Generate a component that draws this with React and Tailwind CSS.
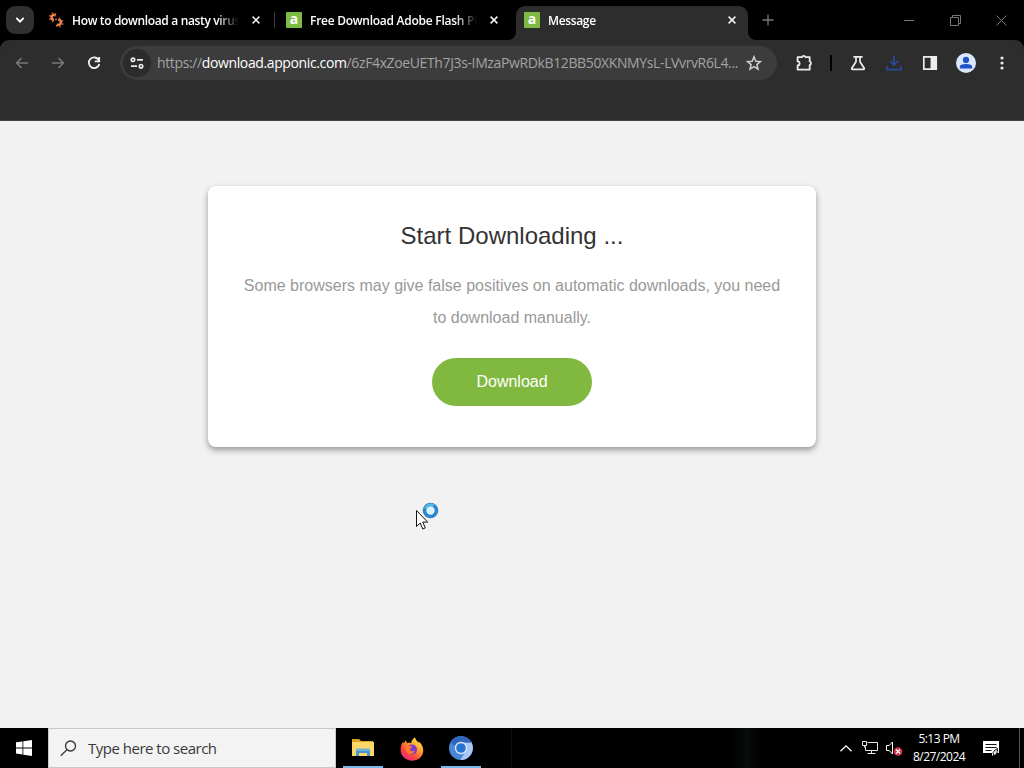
import { useState } from 'react';

const UI_FONT = "font-['Open_Sans','Noto_Sans',sans-serif]";

const TABS = [
  { title: 'How to download a nasty virus', icon: 'gear', spacing: 'tracking-[-0.35px]' },
  { title: 'Free Download Adobe Flash Player', icon: 'apponic', spacing: 'tracking-[-0.26px]' },
  { title: 'Message', icon: 'apponic', spacing: 'tracking-[-0.35px]' },
];

function GearIcon() {
  return (
    <svg width="16" height="16" viewBox="0 0 16 16" fill="none" className="shrink-0">
      <path d="M7.6 3.4Q4.200 2 3.600 5q-.2 2.600 2.400 3" stroke="#f08a58" strokeWidth="2.400" />
      <path d="M1 3.600l2 .6M4.400.6l.5 2M1.200 7.200l2-.6M7.800 1.200L7 3.200M4.400 10l.8-2M7 7.600h2" stroke="#dd6537" strokeWidth="1.500" />
      <path d="M10.200 7.600q3 .4 2.600 3.200-.8 2.800-4 1.800" stroke="#f08a58" strokeWidth="2.400" />
      <path d="M15.400 12.400l-2-.6M12 15.400l-.6-2M15.200 8.600l-2 .6M8.400 14.800l.8-2M11.800 5.800l-.6 2" stroke="#dd6537" strokeWidth="1.500" />
    </svg>
  );
}

function ApponicIcon() {
  return (
    <span className="w-4 h-4 shrink-0 bg-[#7fbb42] rounded-[1px] flex items-center justify-center text-white text-[14px] leading-none font-bold font-['Open_Sans',sans-serif] pb-[3px]">
      a
    </span>
  );
}

function CloseIcon() {
  return (
    <svg width="8" height="8" viewBox="0 0 8 8" stroke="#f2f2f2" strokeWidth="1.5" className="shrink-0">
      <path d="M.6.6l6.8 6.8M7.4.6L.6 7.4" />
    </svg>
  );
}

function Tab({ tab, active, onSelect }) {
  return (
    <div onClick={onSelect} className="relative w-[238px] h-[34px] shrink-0">
      <div className={`flex items-center h-full pl-2 rounded-t-[9px] ${active ? 'w-[232px] bg-[#2d2d2d]' : 'w-[238px]'}`}>
        <div className="flex items-center pb-[6px]">
          {tab.icon === 'gear' ? <GearIcon /> : <ApponicIcon />}
          <span className={`ml-2 mt-0.5 w-[167px] overflow-hidden whitespace-nowrap text-[12px] leading-4 font-semibold text-white mask-r-from-87% ${tab.spacing}`}>
            {tab.title}
          </span>
          <span className="ml-[13px] flex"><CloseIcon /></span>
        </div>
      </div>
      {active && (
        <>
          <svg className="absolute bottom-0 -left-2" width="8" height="8" fill="#2d2d2d"><path d="M8 0v8H0a8 8 0 0 0 8-8z" /></svg>
          <svg className="absolute bottom-0 left-[232px]" width="8" height="8" fill="#2d2d2d"><path d="M0 0v8h8a8 8 0 0 1-8-8z" /></svg>
        </>
      )}
    </div>
  );
}

function TabStrip() {
  const [active, setActive] = useState(2);
  return (
    <div className="h-10 bg-black flex">
      <div className="w-10 pl-[6px] pt-[6px] shrink-0">
        <button className="w-7 h-7 rounded-[9px] bg-[#303030] flex items-center justify-center">
          <svg width="10" height="6" viewBox="0 0 10 6" fill="none" stroke="#fff" strokeWidth="1.9"><path d="M1.3.9L5 4.6 8.7.9" /></svg>
        </button>
      </div>
      <div className="flex pt-[6px] relative">
        {TABS.map((tab, i) => (
          <Tab key={tab.title} tab={tab} active={active === i} onSelect={() => setActive(i)} />
        ))}
        <span className="absolute left-[234px] top-3 w-px h-4 bg-[#3a3a3a]" />
      </div>
      <div className="pt-[14px] pl-2">
        <svg width="12" height="12" stroke="#7a7a7a" strokeWidth="1.3"><path d="M6 .5v11M.5 6h11" /></svg>
      </div>
      <div className="ml-auto flex text-[#777]">
        <button className="w-[46px] h-10 flex items-center justify-center">
          <svg width="10" height="10" stroke="currentColor"><path d="M0 5.5h10" /></svg>
        </button>
        <button className="w-[46px] h-10 flex items-center justify-center">
          <svg width="11" height="11" fill="none" stroke="currentColor"><path d="M.5 2.5h8v8h-8zM2.5 2.5v-2h8v8h-2" /></svg>
        </button>
        <button className="w-[46px] h-10 flex items-center justify-center">
          <svg width="11" height="11" fill="none" stroke="currentColor"><path d="M.5.5l10 10M10.5.5l-10 10" /></svg>
        </button>
      </div>
    </div>
  );
}

function ToolButton({ children }) {
  return <button className="w-9 h-[34px] flex items-center justify-center shrink-0">{children}</button>;
}

function Toolbar() {
  return (
    <div className="bg-black">
      <div className="h-[81px] bg-[#2d2d2d] border-b border-[#454545] pt-[6px] rounded-t-[9px]">
        <div className="flex items-center h-[34px] pl-1">
          <ToolButton>
            <svg width="14" height="12" fill="none" stroke="#787878" strokeWidth="1.6"><path d="M13 6H1.6M6.6 1L1.6 6l5 5" /></svg>
          </ToolButton>
          <ToolButton>
            <svg width="14" height="12" fill="none" stroke="#787878" strokeWidth="1.6"><path d="M1 6h11.4M7.4 1l5 5-5 5" /></svg>
          </ToolButton>
          <ToolButton>
            <svg width="14" height="14" fill="none" stroke="#f0f0f0" strokeWidth="1.8"><path d="M11.8 4.2A5.3 5.3 0 1 0 12.3 8M12.2.9v4.4H7.8" /></svg>
          </ToolButton>
          <div className="ml-2 w-[657px] h-[34px] rounded-full bg-[#3c3c3c] flex items-center pl-[3px] shrink-0">
            <span className="w-7 h-7 rounded-full bg-[#2b2b2b] flex items-center justify-center shrink-0">
              <svg width="14" height="12" fill="none" stroke="#e8e8e8" strokeWidth="1.7"><circle cx="3" cy="2.8" r="1.7" /><path d="M7 2.8h6M1 9.2h6" /><circle cx="11" cy="9.2" r="1.7" /></svg>
            </span>
            <span className="ml-[6px] w-[588px] whitespace-nowrap text-[14px] leading-5 tracking-[-0.375px] text-[#a3a3a3]">
              https://<span className="text-white">download.apponic.com</span>/6zF4xZoeUETh7J3s-IMzaPwRDkB12BB50XKNMYsL-LVvrvR6L4...
            </span>
            <svg width="16" height="16" viewBox="0 0 16 16" fill="none" stroke="#d0d0d0" strokeWidth="1.5" className="shrink-0 ml-px"><path d="M8 1.8l1.8 4.4 4.7.4-3.6 3 1.1 4.6L8 11.7l-4 2.5 1.1-4.6-3.6-3 4.7-.4z" /></svg>
          </div>
          <div className="ml-[9px] flex items-center">
            <ToolButton>
              <svg width="18" height="18" viewBox="0 0 18 18" fill="none" stroke="#ececec" strokeWidth="1.8" strokeLinejoin="round"><path d="M2.600 3.200h4.300a1.900 1.900 0 0 1 3.600 0h4.200v4.300a1.900 1.900 0 0 1 0 3.600v4.500H2.600v-4.200a2 2 0 0 0 0-4z" /></svg>
            </ToolButton>
            <span className="mx-2 w-0.5 h-4 bg-black" />
            <ToolButton>
              <svg width="16" height="16" fill="none" stroke="#ececec" strokeWidth="1.7"><path d="M3.4 1.8h9.2M6 2v4.7l-4.2 6.5q-.3 1 .7 1.1h11q1-.1.7-1.1L10 6.7V2" /></svg>
            </ToolButton>
            <ToolButton>
              <svg width="16" height="16" fill="none" stroke="#2a4a9c" strokeWidth="1.7"><path d="M8 .5v9.4M4 6l4 4 4-4M1 11v3.6h14V11" /></svg>
            </ToolButton>
            <ToolButton>
              <svg width="16" height="16" fill="none" stroke="#ececec" strokeWidth="1.7"><path d="M1.8 1.8h12.4v12.4H1.8z" /><path d="M9.4 1.8h4.8v12.4H9.4z" fill="#ececec" /></svg>
            </ToolButton>
            <ToolButton>
              <svg width="20" height="20"><circle cx="10" cy="10" r="10" fill="#d9e6fc" /><circle cx="10" cy="6.9" r="3.1" fill="#1f55c4" /><path d="M3.8 15.4v-1.5q0-2.8 6.2-2.8t6.2 2.8v1.5z" fill="#1f55c4" /></svg>
            </ToolButton>
            <ToolButton>
              <svg width="4" height="16" fill="#ececec"><circle cx="2" cy="3" r="1.6" /><circle cx="2" cy="8" r="1.6" /><circle cx="2" cy="13" r="1.6" /></svg>
            </ToolButton>
          </div>
        </div>
      </div>
    </div>
  );
}

function Cursor() {
  return (
    <svg className="absolute left-[415px] top-[381px]" width="26" height="30" fill="none">
      <circle cx="15.5" cy="8.5" r="6" stroke="#2f86c9" strokeWidth="3.6" fill="#d9f3fd" />
      <path d="M10.2 6.4a5.8 5.8 0 0 1 8.4-2.6" stroke="#55b9ea" strokeWidth="2.6" />
      <path d="M1.5 8.5v16l3.7-3.5 2.6 6 2.5-1.1-2.6-5.8h5z" fill="#fff" stroke="#111" />
    </svg>
  );
}

function Page() {
  return (
    <main className="relative h-[607px] bg-[#f2f2f2] pt-[65px] font-['Liberation_Sans',Arial,sans-serif]">
      <div className="mx-auto w-[608px] h-[261px] bg-white rounded-lg shadow-[0_3px_6px_rgba(0,0,0,0.38)] px-8 pt-8 text-center">
        <h1 className="text-[24px] leading-9 text-[#333]">Start Downloading ...</h1>
        <p className="mt-4 text-[16px] leading-8 text-[#999]">
          Some browsers may give false positives on automatic downloads, you need to download manually.
        </p>
        <button className="mt-6 w-40 h-12 rounded-full bg-[#80b840] text-white text-[16px]">Download</button>
      </div>
      <Cursor />
    </main>
  );
}

function ExplorerIcon() {
  return (
    <svg width="22" height="18" viewBox="0 0 22 18">
      <path d="M0 0h7l2 2h12v4H0z" fill="#d9a326" />
      <path d="M0 3h22v14H0z" fill="#fbd768" />
      <path d="M4 17v-6h14v6h-3v-3H7v3z" fill="#4a94cf" />
      <path d="M4 9.5h14V12H4z" fill="#6fb2e0" />
    </svg>
  );
}

function FirefoxIcon() {
  return (
    <svg width="24" height="24" viewBox="0 0 24 24">
      <defs>
        <linearGradient id="fox" x1="0.85" y1="0.05" x2="0.2" y2="0.95">
          <stop offset="0" stopColor="#fff04f" />
          <stop offset="0.4" stopColor="#ff9a2a" />
          <stop offset="0.7" stopColor="#ff4a3c" />
          <stop offset="1" stopColor="#e8257e" />
        </linearGradient>
      </defs>
      <path d="M15 .2c.3 2.4 2.1 3.7 3.6 5.6l.2-1.4c3.3 3 4.8 6.3 4.4 10C22.6 19.8 18 23.7 12 23.7S.8 19.2.6 13.3C.5 9.7 1.6 6.9 3.4 4.6l.5 2L5.6 3.2l1.6 3c1.3-.5 2.5-.4 3.8.1C11.5 3.6 12.8 1.6 15 .2z" fill="url(#fox)" />
      <circle cx="12" cy="12.6" r="5" fill="#7a3bd0" />
      <path d="M6 8.3c3 .1 4.6 1 6.5 1.2-.4 1.5-2.3 1.3-2.5 2.7.4 2.4 3.3 2.8 5.2 1.1-.8 3.6-5.4 5-8 2.5C5.3 13.8 5 11 6 8.3z" fill="#ff7a2b" />
    </svg>
  );
}

function ChromiumIcon() {
  return (
    <svg width="24" height="24" viewBox="0 0 24 24">
      <circle cx="12" cy="12" r="12" fill="#4a86d6" />
      <path d="M12 6.5h10.500A12 12 0 0 1 11.3 24l5.5-9z" fill="#a9c6f8" />
      <path d="M1.6 6A12 12 0 0 1 22.5 6.5H12a5.5 5.5 0 0 0-5.3 4.2z" fill="#2f66b8" />
      <circle cx="12" cy="12" r="6.2" fill="#dbe9ff" />
      <circle cx="12" cy="12" r="4.8" fill="#2872d2" />
    </svg>
  );
}

function TaskItem({ running, children }) {
  return (
    <div className="w-10 h-10 flex flex-col items-center">
      <div className="h-10 pt-0.5 flex items-center justify-center">{children}</div>
      {running && <div className="w-10 h-0.5 shrink-0 bg-[#79b9ec]" />}
    </div>
  );
}

function Taskbar() {
  return (
    <footer className="h-10 bg-black flex text-white">
      <button className="w-12 flex items-center justify-center">
        <svg width="16" height="16" fill="#fff"><path d="M0 2.3l6.5-.9v6.1H0zM7.3 1.3L16 0v7.5H7.3zM0 8.4h6.5v6.1L0 13.6zM7.3 8.4H16V16l-8.7-1.3z" /></svg>
      </button>
      <div className="w-72 bg-[#f3f3f3] border border-[#c8c8c8] flex items-center pl-[11px]">
        <svg width="17" height="17" fill="none" stroke="#333" strokeWidth="1.3"><circle cx="10.5" cy="6" r="5" /><path d="M7 9.6L.8 15.8" /></svg>
        <span className="ml-[11px] text-[15px] leading-5 tracking-[-0.5px] text-[#3a3a3a]">Type here to search</span>
      </div>
      <div className="flex gap-[9px] pl-[7px]">
        <TaskItem running><ExplorerIcon /></TaskItem>
        <TaskItem><FirefoxIcon /></TaskItem>
        <TaskItem running><ChromiumIcon /></TaskItem>
      </div>
      <div className="ml-[30px] w-px h-10 bg-[#0e0e0e]" />
      <div className="ml-[210px] w-[50px] h-10 bg-linear-to-r from-black via-[#0a0d0d] to-black" />
      <div className="ml-auto flex items-center">
        <svg width="12" height="7" fill="none" stroke="#fff" strokeWidth="1.3"><path d="M.5 6.3L6 .9l5.500 5.4" /></svg>
        <svg width="17" height="14" fill="none" stroke="#e8e8e8" className="ml-[10px]"><path d="M5.5 1.500h10v8h-12v-4M.5.500h4v4h-4zM9.500 9.500v3M5.500 12.500h8M2.500 4.500v2" /></svg>
        <svg width="17" height="15" fill="none" stroke="#fff" className="ml-[7px]">
          <path d="M.5 4.5h2.7l3.3-3.5v12l-3.3-3.5H.5z" />
          <circle cx="12" cy="10.5" r="4.3" fill="#d63548" stroke="none" />
          <path d="M10 8.5l4 4M14 8.5l-4 4" strokeWidth="1.2" />
        </svg>
        <div className="ml-[6px] w-[60px] text-center text-[12px] leading-[18px] tracking-[-0.52px] whitespace-nowrap">
          <div>5:13 PM</div>
          <div>8/27/2024</div>
        </div>
        <svg width="17" height="17" className="ml-[14px]">
          <path d="M0 1h16v12h-4l-3 3v-3H0z" fill="#fff" />
          <path d="M2.5 4.5h11M2.5 7.5h11M2.5 10.5h6" stroke="#111" />
          <path d="M11 15.500q-2.500-3 1-5.500l2.500-1.500-.5 4.500q-1 2-3 2.500z" fill="#eee" stroke="#111" />
        </svg>
        <div className="ml-[19px] mr-1 w-px h-10 bg-[#555]" />
      </div>
    </footer>
  );
}

export default function App() {
  return (
    <div className={`w-[1024px] h-[768px] overflow-hidden ${UI_FONT}`}>
      <TabStrip />
      <Toolbar />
      <Page />
      <Taskbar />
    </div>
  );
}
